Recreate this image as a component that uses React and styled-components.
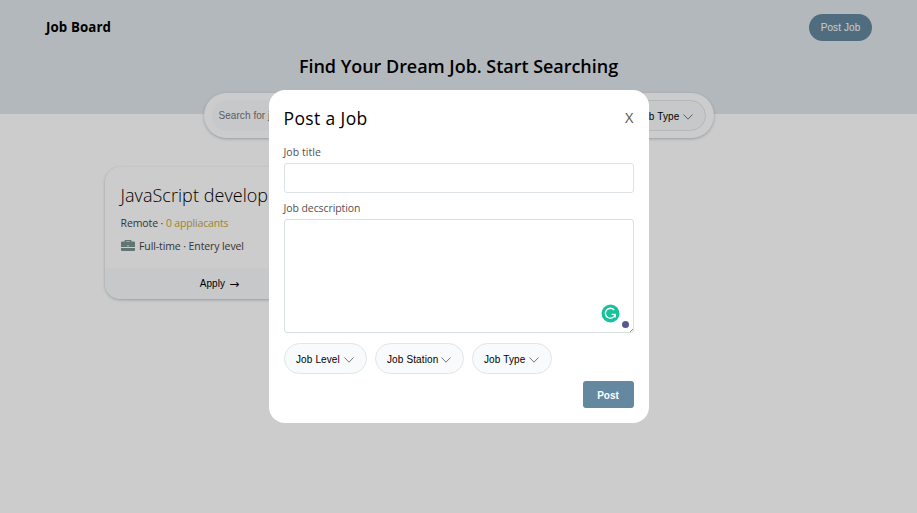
import React from "react";
import styled, { createGlobalStyle } from "styled-components";

const GlobalStyle = createGlobalStyle`
  * { box-sizing: border-box; }
  body { margin: 0; background: #fff; font-family: "Open Sans", "Noto Sans", sans-serif; color: #000; }
  h1, h2, h3, p { margin: 0; }
  button, input, textarea { font-family: "Liberation Sans", Arial, sans-serif; }
`;

const Page = styled.div`
  height: 100vh;
  overflow: hidden;
`;

const Header = styled.header`
  height: 114px;
  background: #e0e6eb;
`;

const Nav = styled.nav`
  display: flex;
  align-items: center;
  justify-content: space-between;
  height: 54px;
  padding: 0 45px 0 46px;
`;

const Logo = styled.span`
  font-size: 13.3px;
  font-weight: 700;
  line-height: 18px;
  letter-spacing: 0.1px;
`;

const PostJobButton = styled.button`
  width: 63px;
  height: 27px;
  padding: 0;
  border: 0;
  border-radius: 14px;
  background: #64889f;
  color: #fff;
  font-size: 10px;
  letter-spacing: 0.1px;
`;

const Headline = styled.h1`
  height: 39px;
  font-size: 18px;
  font-weight: 600;
  line-height: 25px;
  letter-spacing: -0.04px;
  text-align: center;
`;

const SearchBar = styled.div`
  display: flex;
  align-items: center;
  gap: 8px;
  width: 510px;
  height: 45px;
  margin: 0 auto;
  padding: 0 8px;
  border-radius: 23px;
  background: #fff;
  box-shadow: 0 1px 3px rgba(80, 110, 130, 0.4);
`;

const SearchInput = styled.input`
  flex: 1;
  min-width: 0;
  height: 31px;
  padding: 0 7px;
  border: 0;
  border-radius: 15px;
  background: #f8fafc;
  font-size: 10px;
  letter-spacing: 0.06px;
  &::placeholder { color: #757575; }
`;

const SelectPill = styled.button`
  display: flex;
  flex: none;
  align-items: center;
  justify-content: space-between;
  width: ${(p) => p.$width}px;
  height: 31px;
  padding: 2px 12px 0 11.5px;
  border: 1px solid #e1e6e9;
  border-radius: 16px;
  background: #f8fafc;
  color: #000;
  font-size: 10px;
  letter-spacing: 0.12px;
  white-space: nowrap;
`;

const Jobs = styled.main`
  display: flex;
  padding: 53px 105px;
`;

const Card = styled.article`
  width: 229px;
  height: 132px;
  overflow: hidden;
  border-radius: 15px;
  background: #fff;
  box-shadow: 0 1px 3px rgba(80, 110, 130, 0.4);
`;

const CardBody = styled.div`
  height: 101px;
  padding: 14px 15.5px 0;
`;

const CardTitle = styled.h3`
  height: 31px;
  font-size: 18px;
  font-weight: 300;
  line-height: 29px;
  letter-spacing: 0.05px;
  white-space: nowrap;
`;

const Meta = styled.p`
  display: flex;
  align-items: center;
  height: 22.5px;
  color: #444;
  font-size: 10.5px;
  font-weight: 400;
  letter-spacing: -0.1px;
  white-space: pre;
`;

const Applicants = styled.span`
  color: #c9a53c;
  letter-spacing: -0.16px;
`;

const CardFooter = styled.button`
  display: flex;
  align-items: center;
  justify-content: center;
  gap: 4px;
  width: 100%;
  height: 31px;
  padding: 0;
  border: 0;
  background: #f8fafc;
  color: #000;
  font-size: 10px;
  letter-spacing: 0.1px;
`;

const Arrow = styled.span`
  font-family: "DejaVu Sans", sans-serif;
  font-size: 12px;
  line-height: 12px;
`;

const Overlay = styled.div`
  position: fixed;
  inset: 0;
  display: flex;
  align-items: center;
  justify-content: center;
  background: rgba(0, 0, 0, 0.2);
`;

const Modal = styled.section`
  width: 380px;
  height: 333px;
  padding: 15px;
  border-radius: 16px;
  background: #fff;
`;

const ModalHeader = styled.div`
  display: flex;
  align-items: center;
  justify-content: space-between;
  height: 27px;
`;

const ModalTitle = styled.h2`
  padding-bottom: 1px;
  font-size: 17.5px;
  font-weight: 400;
  line-height: 26px;
  letter-spacing: 0.38px;
`;

const CloseButton = styled.button`
  padding: 0 0 2px;
  border: 0;
  background: none;
  color: #555;
  && { font-family: "Open Sans", sans-serif; }
  font-size: 14.5px;
  line-height: 24px;
`;

const Label = styled.label`
  display: block;
  height: 15px;
  margin-top: ${(p) => p.$top}px;
  margin-bottom: 3px;
  color: #554f52;
  font-size: 10.5px;
  font-weight: 400;
  line-height: 15px;
  letter-spacing: ${(p) => p.$spacing}px;
`;

const TitleInput = styled.input`
  display: block;
  width: 100%;
  height: 30px;
  border: 1px solid #dce2e6;
  border-radius: 3px;
  background: #fff;
`;

const DescriptionField = styled.div`
  position: relative;
`;

const Description = styled.textarea`
  display: block;
  width: 100%;
  height: 114px;
  border: 1px solid #d9dfe3;
  border-radius: 3px;
  background: #fff;
  resize: none;
`;

const AssistantBadge = styled.svg`
  position: absolute;
  right: 14px;
  bottom: 10px;
`;

const StatusDot = styled.span`
  position: absolute;
  right: 5px;
  bottom: 5px;
  width: 7px;
  height: 7px;
  border-radius: 50%;
  background: #575796;
`;

const ResizeGrip = styled.svg`
  position: absolute;
  right: 1px;
  bottom: 1px;
`;

const PillRow = styled.div`
  display: flex;
  gap: 8px;
  margin-top: 10px;
`;

const ModalActions = styled.div`
  display: flex;
  justify-content: flex-end;
  margin-top: 7px;
`;

const PostButton = styled.button`
  width: 51px;
  height: 27px;
  padding: 1px 0 0;
  border: 0;
  border-radius: 3px;
  background: #64889f;
  color: #fff;
  font-size: 10px;
  font-weight: 700;
`;

const BriefcaseIcon = styled.svg`
  margin-right: 4.5px;
`;

const Chevron = () => (
  <svg width="10" height="6" viewBox="0 0 10 6" fill="none" stroke="#777" strokeWidth="1">
    <path d="M.5.5 5 5.2 9.5.5" />
  </svg>
);

const Select = ({ label, width }) => (
  <SelectPill $width={width}>
    {label}
    <Chevron />
  </SelectPill>
);

const JobFilters = () => (
  <>
    <Select label="Job Level" width={83} />
    <Select label="Job Station" width={89} />
    <Select label="Job Type" width={80} />
  </>
);

const JobCard = () => (
  <Card>
    <CardBody>
      <CardTitle>JavaScript developer</CardTitle>
      <Meta>
        {"Remote · "}
        <Applicants>0 appliacants</Applicants>
      </Meta>
      <Meta>
        <BriefcaseIcon width="14" height="12" viewBox="0 0 14 12" fill="#7a9490">
          <path d="M0 2.5Q0 1.5 1 1.5H3.5V.8Q3.5 0 4.3 0H9.7Q10.5 0 10.5.8V1.5H13Q14 1.5 14 2.5V7H0ZM5 1.5H9V1H5ZM0 8H14V10Q14 11 13 11H1Q0 11 0 10Z" />
          <circle cx="7" cy="5.8" r=".7" fill="#fff" />
        </BriefcaseIcon>
        Full-time · Entery level
      </Meta>
    </CardBody>
    <CardFooter>
      Apply <Arrow>→</Arrow>
    </CardFooter>
  </Card>
);

export default function App() {
  return (
    <>
      <GlobalStyle />
      <Page>
        <Header>
          <Nav>
            <Logo>Job Board</Logo>
            <PostJobButton>Post Job</PostJobButton>
          </Nav>
          <Headline>Find Your Dream Job. Start Searching</Headline>
          <SearchBar>
            <SearchInput placeholder="Search for job" />
            <JobFilters />
          </SearchBar>
        </Header>
        <Jobs>
          <JobCard />
        </Jobs>
      </Page>
      <Overlay>
        <Modal role="dialog" aria-label="Post a Job">
          <ModalHeader>
            <ModalTitle>Post a Job</ModalTitle>
            <CloseButton>X</CloseButton>
          </ModalHeader>
          <Label $top={13} $spacing={0.05} htmlFor="title">Job title</Label>
          <TitleInput id="title" />
          <Label $top={8} $spacing={-0.08} htmlFor="description">Job decscription</Label>
          <DescriptionField>
            <Description id="description" />
            <AssistantBadge width="19" height="19" viewBox="0 0 19 19" fill="none">
              <circle cx="9.5" cy="9.5" r="9" fill="#15c39a" />
              <path d="M13.3 6.1A5 5 0 1 0 14.1 11M10.6 10.4H14.2V13.6" stroke="#fff" strokeWidth="1.3" />
            </AssistantBadge>
            <StatusDot />
            <ResizeGrip width="4" height="4" viewBox="0 0 4 4">
              <path d="M1 4 4 1" stroke="#777" strokeWidth=".8" />
            </ResizeGrip>
          </DescriptionField>
          <PillRow>
            <JobFilters />
          </PillRow>
          <ModalActions>
            <PostButton>Post</PostButton>
          </ModalActions>
        </Modal>
      </Overlay>
    </>
  );
}
